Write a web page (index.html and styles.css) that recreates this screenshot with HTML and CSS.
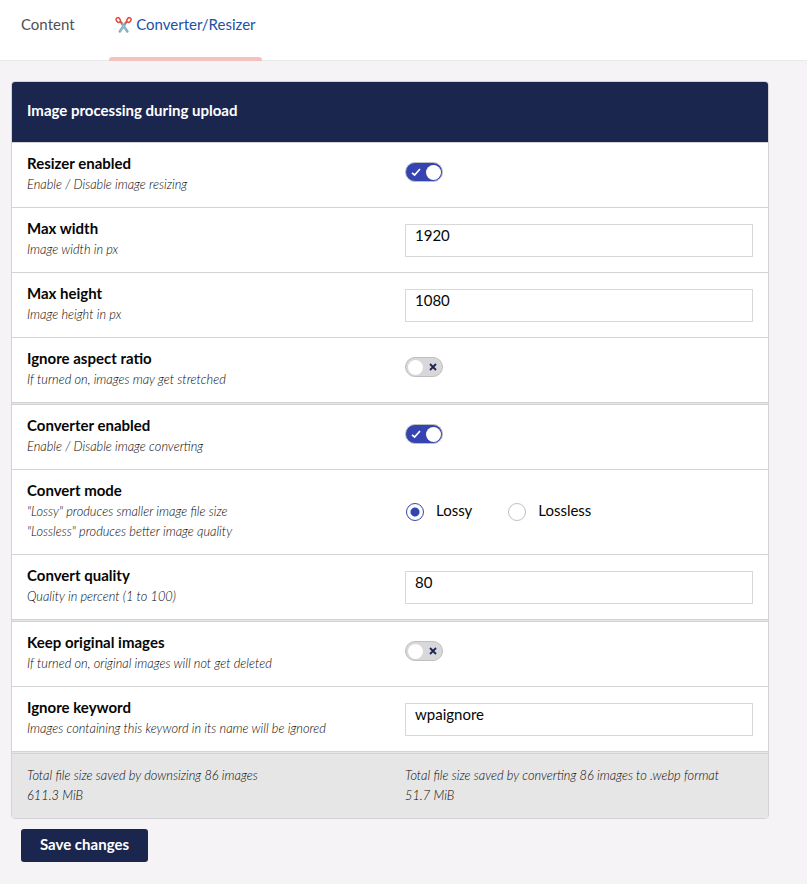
FILE: index.html
```html
<!DOCTYPE html>
<html lang="en">
<head>
<meta charset="utf-8">
<title>Converter/Resizer</title>
<link rel="stylesheet" href="styles.css">
</head>
<body>
<nav class="tabs">
  <a class="tab">Content</a>
  <a class="tab active"><svg class="scissors" viewBox="0 0 18 18" fill="none"><path d="M6.6 6.6 13 15.8M11.4 6.6 5 15.8" stroke="#7fa9ba" stroke-width="2.6" stroke-linecap="round"/><path d="M8 9 12.5 15.5M10 9 5.5 15.5" stroke="#a9cbd6" stroke-width=".7"/><ellipse cx="3.4" cy="3.8" rx="2" ry="2.6" transform="rotate(-30 3.4 3.8)" stroke="#e2493c" stroke-width="1.6"/><ellipse cx="14.6" cy="3.8" rx="2" ry="2.6" transform="rotate(30 14.6 3.8)" stroke="#e2493c" stroke-width="1.6"/><path d="M5.7 5.4 7.4 7M12.3 5.4 10.6 7" stroke="#e2493c" stroke-width="1.7"/></svg>Converter/Resizer</a>
</nav>
<main class="page">
  <section class="card">
    <h1 class="card-title">Image processing during upload</h1>
    <div class="row">
      <div><div class="label">Resizer enabled</div><div class="hint">Enable / Disable image resizing</div></div>
      <div class="control"><span class="toggle on"><svg class="check" viewBox="0 0 10 10"><path d="M1 5.8 3.6 8 9 2" /></svg><i class="knob"></i></span></div>
    </div>
    <div class="row">
      <div><div class="label">Max width</div><div class="hint">Image width in px</div></div>
      <div class="control"><div class="field">1920</div></div>
    </div>
    <div class="row">
      <div><div class="label">Max height</div><div class="hint">Image height in px</div></div>
      <div class="control"><div class="field">1080</div></div>
    </div>
    <div class="row">
      <div><div class="label">Ignore aspect ratio</div><div class="hint">If turned on, images may get stretched</div></div>
      <div class="control"><span class="toggle"><i class="knob"></i><svg class="cross" viewBox="0 0 8 8"><path d="M1 1 7 7M7 1 1 7"/></svg></span></div>
    </div>
    <div class="row group">
      <div><div class="label">Converter enabled</div><div class="hint">Enable / Disable image converting</div></div>
      <div class="control"><span class="toggle on"><svg class="check" viewBox="0 0 10 10"><path d="M1 5.8 3.6 8 9 2" /></svg><i class="knob"></i></span></div>
    </div>
    <div class="row">
      <div><div class="label">Convert mode</div><div class="hint">"Lossy" produces smaller image file size<br>"Lossless" produces better image quality</div></div>
      <div class="control radios"><span class="radio checked"></span><span class="option">Lossy</span><span class="radio"></span><span class="option">Lossless</span></div>
    </div>
    <div class="row">
      <div><div class="label">Convert quality</div><div class="hint">Quality in percent (1 to 100)</div></div>
      <div class="control"><div class="field">80</div></div>
    </div>
    <div class="row group">
      <div><div class="label">Keep original images</div><div class="hint">If turned on, original images will not get deleted</div></div>
      <div class="control"><span class="toggle"><i class="knob"></i><svg class="cross" viewBox="0 0 8 8"><path d="M1 1 7 7M7 1 1 7"/></svg></span></div>
    </div>
    <div class="row">
      <div><div class="label">Ignore keyword</div><div class="hint">Images containing this keyword in its name will be ignored</div></div>
      <div class="control"><div class="field">wpaignore</div></div>
    </div>
    <div class="row group summary">
      <div class="hint">Total file size saved by downsizing 86 images<br>611.3 MiB</div>
      <div class="hint">Total file size saved by converting 86 images to .webp format<br>51.7 MiB</div>
    </div>
  </section>
  <button class="save">Save changes</button>
</main>
</body>
</html>
```
FILE: styles.css
```css
* { box-sizing: border-box; }
body {
  margin: 0;
  min-height: 884px;
  background: #f5f3f5;
  color: #060606;
  font: 15px/20px Lato, sans-serif;
}
.tabs {
  display: flex;
  height: 61px;
  padding-left: 15px;
  background: #fff;
  border-bottom: 1px solid #e9e9eb;
}
.tab {
  height: 61px;
  padding: 14px 6px 0;
  color: #515054;
}
.tab.active {
  position: relative;
  display: flex;
  width: 153px;
  margin-left: 28px;
  color: #2152a3;
}
.tab.active::after {
  content: "";
  position: absolute;
  left: 0;
  right: 0;
  bottom: 0;
  height: 4px;
  border-radius: 3px 3px 0 0;
  background: #f5c1bc;
}
.scissors { width: 18px; height: 18px; margin: 2px 4.5px 0 0; }
.page { padding: 20px 0 0 11px; }
.card {
  width: 758px;
  border: 1px solid #d3d3d6;
  border-radius: 4px;
  background: #fff;
  overflow: hidden;
}
.card-title {
  height: 60px;
  margin: 0;
  padding: 18px 15px 0;
  background: #1b264f;
  color: #fff;
  font-size: 15px;
  font-weight: 700;
  line-height: 20px;
}
.row {
  display: grid;
  grid-template-columns: 378px 348px;
  padding: 10px 15px 13px;
  border-top: 1px solid #d3d3d6;
}
.row.group { border-top: 3px double #d3d3d6; background-color: #e6e6e6; background: linear-gradient(#e6e6e6, #e6e6e6) 0 0 / 100% 3px no-repeat border-box, #fff; }
.label { font-weight: 700; }
.hint {
  margin-top: 1px;
  color: #060606;
  font-size: 12.8px;
  font-style: italic;
  font-weight: 300;
}
.control { display: flex; align-items: flex-start; }
.toggle {
  display: flex;
  align-items: center;
  justify-content: space-between;
  width: 38px;
  height: 20px;
  margin-top: 9px;
  padding: 0 5px 0 1.5px;
  border: 1px solid #bfbfc1;
  border-radius: 10px;
  background: #d8d7d9;
}
.toggle.on { padding: 0 1.5px 0 5px; background: #3544b1; }
.knob { width: 15px; height: 15px; border-radius: 50%; background: #fff; }
.check { width: 10px; height: 10px; fill: none; stroke: #fff; stroke-width: 1.7; }
.cross { width: 8px; height: 8px; fill: none; stroke: #1b264f; stroke-width: 1.8; }
.field {
  width: 348px;
  height: 33px;
  margin-top: 6px;
  padding: 0 9px;
  border: 1px solid #d8d7d9;
}
.radios { align-items: center; padding-top: 2px; }
.radio {
  width: 18px;
  height: 18px;
  margin: 0 12px 0 1px;
  border: 1px solid #bfbfc1;
  border-radius: 50%;
}
.radio.checked { border-color: #3544b1; background: radial-gradient(circle, #3544b1 4px, #fff 5px); }
.option { margin: -3px 35px 0 0; }
.summary.group { background: #e6e6e6; }
.save {
  display: block;
  width: 127px;
  height: 33px;
  margin: 10px 0 0 10px;
  padding: 0 0 4px;
  border: 0;
  border-radius: 3px;
  background: #1b264f;
  color: #fff;
  font: 700 15px/20px Lato, sans-serif;
}
```
